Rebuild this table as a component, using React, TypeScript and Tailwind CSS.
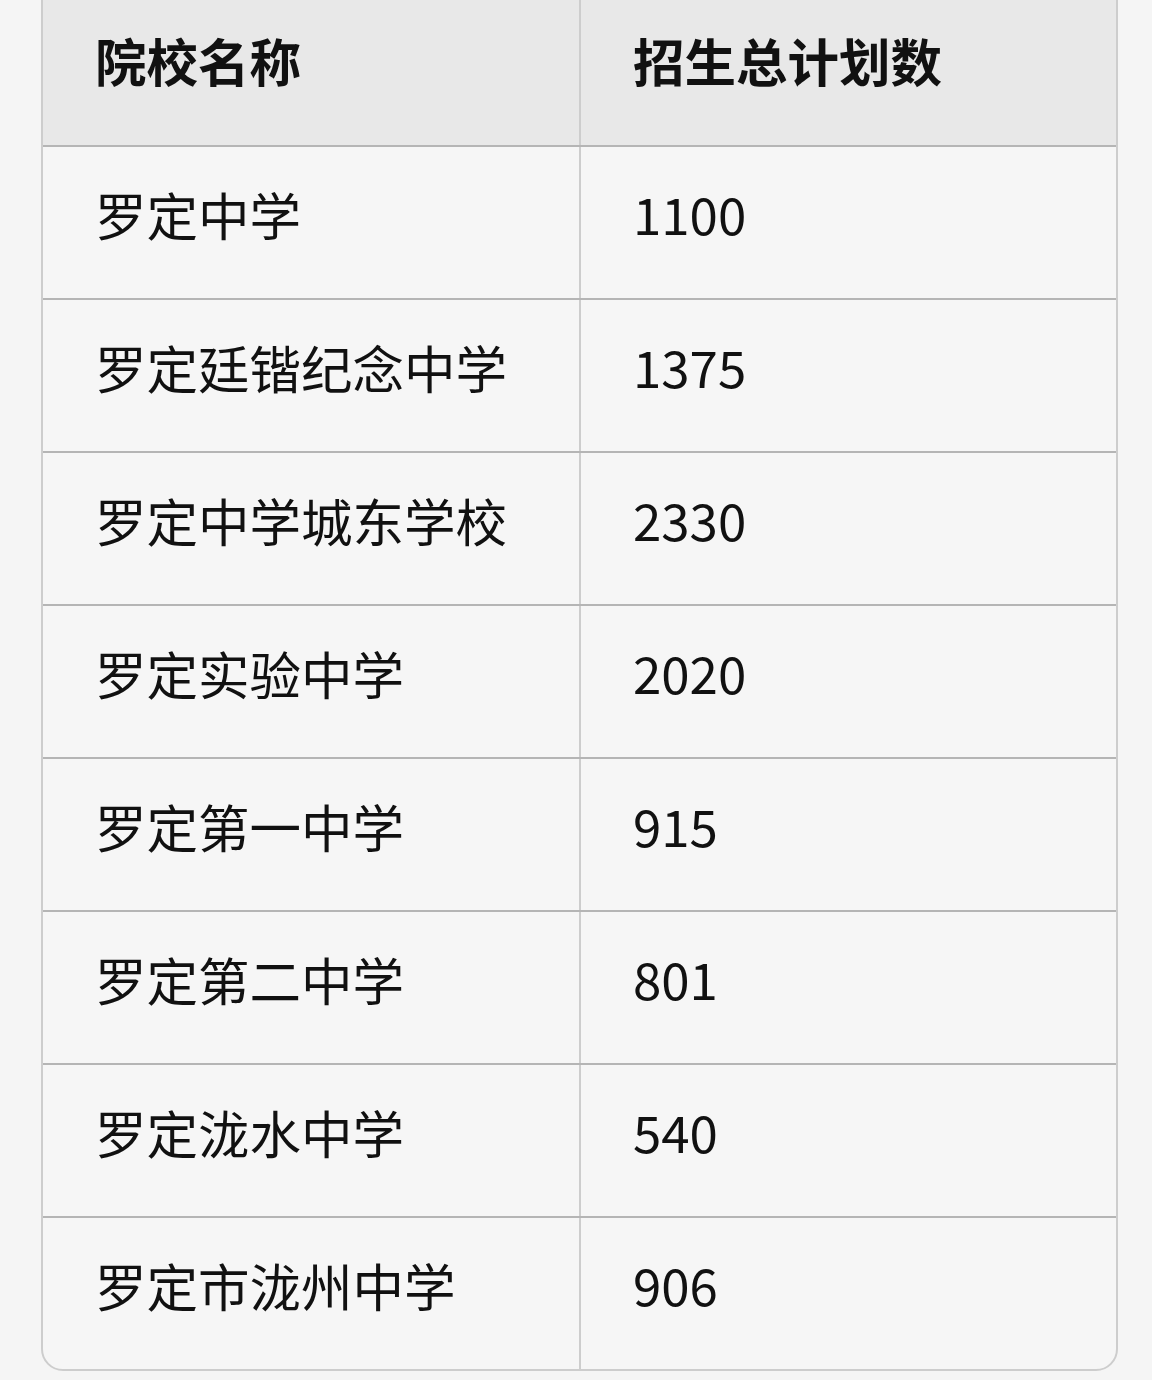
import React from "react";

const rows: [string, string][] = [
  ["罗定中学", "1100"],
  ["罗定廷锴纪念中学", "1375"],
  ["罗定中学城东学校", "2330"],
  ["罗定实验中学", "2020"],
  ["罗定第一中学", "915"],
  ["罗定第二中学", "801"],
  ["罗定泷水中学", "540"],
  ["罗定市泷州中学", "906"],
];

export default function App() {
  return (
    <div
      className="w-[1152px] h-[1380px] bg-[#f5f5f5] overflow-hidden pl-[41px] pr-[34px]"
      style={{ fontFamily: '"Noto Sans CJK SC", "Noto Sans", sans-serif' }}
    >
      <div className="-mt-[20px] border-2 border-[#cdcdcd] rounded-b-[22px] overflow-hidden bg-[#f6f6f6]">
        <div className="grid grid-cols-[538px_1fr] h-[165px] bg-[#e8e8e8] border-b-2 border-[#b5b5b5]">
          <div className="border-r-2 border-[#cdcdcd] flex items-center pl-[52px] pb-[8px] text-[51.5px] font-bold text-[#111] leading-none">
            院校名称
          </div>
          <div className="flex items-center pl-[52px] pb-[8px] text-[51.5px] font-bold text-[#111] leading-none">
            招生总计划数
          </div>
        </div>
        {rows.map(([name, n], i) => (
          <div
            key={name}
            className={
              i < rows.length - 1
                ? "grid grid-cols-[538px_1fr] h-[153px] border-b-2 border-[#b5b5b5]"
                : "grid grid-cols-[538px_1fr] h-[151px]"
            }
          >
            <div className="border-r-2 border-[#cdcdcd] flex items-center pl-[52px] pb-[18px] text-[51.5px] text-[#111] leading-none">
              {name}
            </div>
            <div className="flex items-center pl-[52px] pb-[18px] text-[51px] text-[#111] leading-none">
              {n}
            </div>
          </div>
        ))}
      </div>
    </div>
  );
}
